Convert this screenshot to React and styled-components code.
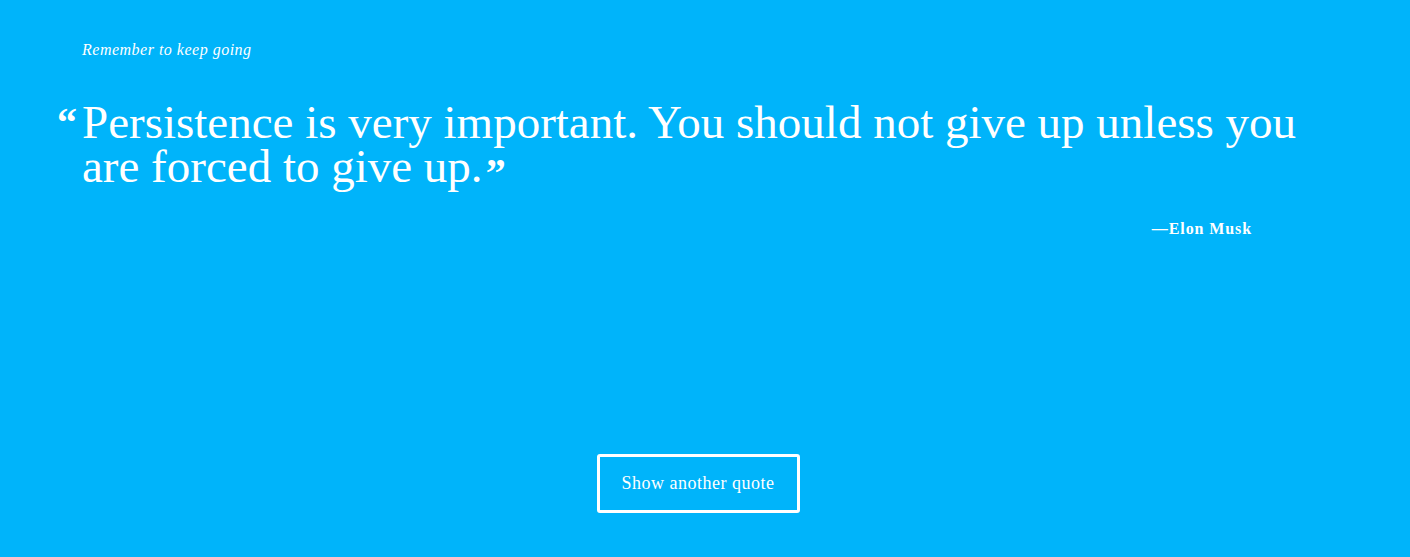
import React from "react";
import styled, { createGlobalStyle } from "styled-components";

const Global = createGlobalStyle`
  html, body { margin: 0; padding: 0; background: #00b4fa; }
  body { font-family: "Liberation Serif", "DejaVu Serif", serif; color: #ffffff; }
`;

const Page = styled.main`
  box-sizing: border-box;
  width: 1410px;
  height: 557px;
  background: #00b4fa;
  display: flex;
  flex-direction: column;
  padding: 39px 0 0 82px;
`;

const Tagline = styled.p`
  margin: 0;
  font-style: italic;
  font-size: 16px;
  letter-spacing: 0.5px;
  line-height: 22px;
`;

const Quote = styled.blockquote`
  position: relative;
  margin: 39px 0 0 0;
  width: 1250px;
  font-size: 47px;
  line-height: 44px;
`;

const OpenMark = styled.span`
  position: absolute;
  left: -25px;
  top: 3px;
  font-size: 40px;
  font-weight: bold;
  line-height: 40px;
`;

const CloseMark = styled.span`
  font-size: 40px;
  font-weight: bold;
  line-height: 0;
  vertical-align: -4px;
  margin-left: 3px;
`;

const Author = styled.p`
  margin: 32px 0 0 0;
  width: 1170px;
  text-align: right;
  font-weight: bold;
  font-size: 16px;
  letter-spacing: 0.9px;
`;

const Footer = styled.div`
  flex: 1;
  display: flex;
  align-items: flex-end;
  justify-content: center;
  padding: 0 96px 44px 0;
`;

const Button = styled.button`
  box-sizing: border-box;
  width: 203px;
  height: 59px;
  background: transparent;
  border: 3px solid #ffffff;
  border-radius: 3px;
  color: #ffffff;
  font-family: "Liberation Serif", "DejaVu Serif", serif;
  font-size: 18px;
  letter-spacing: 0.5px;
`;

export default function App() {
  return (
    <>
      <Global />
      <Page>
        <Tagline>Remember to keep going</Tagline>
        <Quote>
          <OpenMark>“</OpenMark>
          Persistence is very important. You should not give up unless you are forced to give up.
          <CloseMark>”</CloseMark>
        </Quote>
        <Author>—Elon Musk</Author>
        <Footer>
          <Button>Show another quote</Button>
        </Footer>
      </Page>
    </>
  );
}
